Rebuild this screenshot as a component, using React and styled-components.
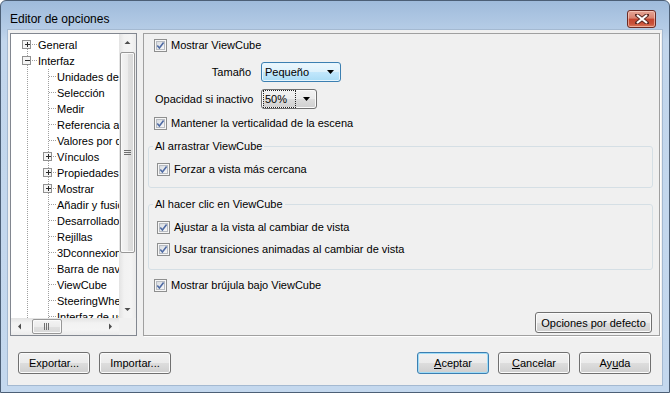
import React from "react";
import styled, { createGlobalStyle } from "styled-components";

const GlobalStyle = createGlobalStyle`
  html, body { margin: 0; padding: 0; background: #fff; }
  body {
    font-family: "Liberation Sans", Arial, sans-serif;
    font-size: 11px;
    color: #000;
  }
`;

const treeItems = [
  { level: 0, label: "General", exp: "+", first: true },
  { level: 0, label: "Interfaz", exp: "-" },
  { level: 1, label: "Unidades de visualización" },
  { level: 1, label: "Selección" },
  { level: 1, label: "Medir" },
  { level: 1, label: "Referencia a objeto" },
  { level: 1, label: "Valores por defecto" },
  { level: 1, label: "Vínculos", exp: "+" },
  { level: 1, label: "Propiedades rápidas", exp: "+" },
  { level: 1, label: "Mostrar", exp: "+" },
  { level: 1, label: "Añadir y fusionar" },
  { level: 1, label: "Desarrollador" },
  { level: 1, label: "Rejillas" },
  { level: 1, label: "3Dconnexion" },
  { level: 1, label: "Barra de navegación" },
  { level: 1, label: "ViewCube" },
  { level: 1, label: "SteeringWheels" },
  { level: 1, label: "Interfaz de usuario" },
];

const Window = styled.div`
  width: 670px;
  height: 393px;
  box-sizing: border-box;
  border: 1px solid #4c5f76;
  border-radius: 6px 6px 0 0;
  background: linear-gradient(#9fbbdb 0px, #b5cce6 28px, #c2d6ec 40px, #c4d8ee 100%);
  display: flex;
  flex-direction: column;
  overflow: hidden;
`;

const TitleBar = styled.div`
  height: 29px;
  flex: none;
  display: flex;
  align-items: center;
  justify-content: space-between;
  padding: 0 13px 0 9px;
`;

const Title = styled.span`
  font-size: 12px;
  padding-top: 7px;
`;

const CloseBtn = styled.div`
  width: 27px;
  height: 16px;
  margin-top: 7px;
  border: 1px solid #6b2b25;
  border-radius: 3px;
  background: linear-gradient(#e6a596 0%, #d8826f 45%, #c5442e 50%, #c9523a 80%, #dc7a5c 100%);
  box-shadow: inset 0 0 0 1px rgba(255, 220, 210, 0.55);
  display: flex;
  align-items: center;
  justify-content: center;
`;

const Client = styled.div`
  flex: 1;
  margin: 0 7px 7px;
  background: #f0f0f0;
  box-shadow: 0 0 0 1px #a4b9d1;
  display: flex;
  flex-direction: column;
  padding: 3px 2px 0;
`;

const Main = styled.div`
  display: flex;
  gap: 6px;
  height: 303px;
`;

/* ---------- tree ---------- */

const Tree = styled.div`
  width: 127px;
  box-sizing: border-box;
  border: 1px solid #828790;
  background: #fff;
  display: grid;
  grid-template-columns: 1fr 17px;
  grid-template-rows: 1fr 17px;
  overflow: hidden;
`;

const TreeBody = styled.div`
  overflow: hidden;
  padding-top: 3px;
`;

const TreeRow = styled.div`
  height: 16px;
  display: flex;
  align-items: center;
  padding-left: 5px;
  white-space: nowrap;
`;

const Guide = styled.svg`
  flex: none;
  display: block;
`;

const TreeLabel = styled.span`
  line-height: 16px;
`;

const VScroll = styled.div`
  grid-column: 2;
  grid-row: 1;
  display: flex;
  flex-direction: column;
  background: linear-gradient(90deg, #e3e3e3, #f2f2f2 30%, #f4f4f4 70%, #ebebeb);
`;

const HScroll = styled.div`
  grid-column: 1;
  grid-row: 2;
  display: flex;
  background: linear-gradient(#e3e3e3, #f2f2f2 30%, #f4f4f4 70%, #ebebeb);
`;

const Corner = styled.div`
  grid-column: 2;
  grid-row: 2;
  background: #f0f0f0;
`;

const ArrowBox = styled.div`
  flex: none;
  width: 17px;
  height: 17px;
  display: flex;
  align-items: center;
  justify-content: center;
`;

const Track = styled.div`
  flex: 1;
  display: flex;
  flex-direction: ${(p) => (p.$vertical ? "column" : "row")};
  padding: ${(p) => (p.$vertical ? "1px 1px" : "1px 0")};
`;

const Thumb = styled.div`
  box-sizing: border-box;
  flex: none;
  ${(p) => (p.$vertical ? `height: ${p.$size}px;` : `width: ${p.$size}px; margin-left: ${p.$offset}px;`)}
  border: 1px solid #979797;
  border-radius: 2px;
  background: ${(p) =>
    p.$vertical
      ? "linear-gradient(90deg, #f4f4f4, #ececec 50%, #e0e0e0 51%, #d8d8d8)"
      : "linear-gradient(#f4f4f4, #ececec 50%, #e0e0e0 51%, #d8d8d8)"};
  box-shadow: inset 0 0 0 1px #fafafa;
  display: flex;
  align-items: center;
  justify-content: center;
`;

/* ---------- right panel ---------- */

const Panel = styled.div`
  flex: 1;
  border: 1px solid #a0a0a0;
  box-shadow: 1px 1px 0 #fff;
  display: flex;
  flex-direction: column;
  padding: 3px 6px 1px 4px;
`;

const CheckRow = styled.label`
  display: flex;
  align-items: center;
  height: 16px;
  margin-top: ${(p) => p.$top || 0}px;
  margin-left: ${(p) => (p.$indent ?? 6)}px;
  white-space: nowrap;
`;

const CheckSvg = styled.svg`
  flex: none;
  display: block;
  margin-right: 4px;
`;

const FieldRow = styled.div`
  display: grid;
  grid-template-columns: 96px auto;
  column-gap: 10px;
  align-items: center;
  height: 20px;
  margin-top: ${(p) => p.$top}px;
  margin-left: 7px;
`;

const FieldLabel = styled.span`
  text-align: right;
  white-space: nowrap;
`;

const Combo = styled.div`
  box-sizing: border-box;
  width: ${(p) => p.$width}px;
  height: 20px;
  border: 1px solid ${(p) => (p.$hot ? "#3c7fb1" : "#707070")};
  border-radius: 3px;
  background: ${(p) =>
    p.$hot
      ? "linear-gradient(#ecf7fd 0%, #dcf1fc 50%, #c2e7fc 51%, #aadcf6 100%)"
      : "linear-gradient(#f2f2f2 0%, #ebebeb 50%, #dddddd 51%, #cfcfcf 100%)"};
  box-shadow: inset 0 0 0 1px ${(p) => (p.$hot ? "#e6f5fd" : "#fafafa")};
  display: flex;
  align-items: center;
  padding-left: ${(p) => (p.$hot ? 3 : 2)}px;
`;

const ComboText = styled.span`
  flex: 1;
  display: flex;
`;

const Focus = styled.span`
  outline: 1px dotted #222;
  padding: 1px 8px 1px 1px;
  line-height: 14px;
`;

const ComboArrow = styled.svg`
  flex: none;
  margin: 0 6px 0 4px;
`;

const Group = styled.fieldset`
  margin: ${(p) => p.$top}px 0 0;
  padding: 0 8px ${(p) => p.$bottom}px;
  border: 1px solid #d5dfe5;
  border-radius: 3px;
  min-width: 0;
`;

const Legend = styled.legend`
  padding: 0 2px;
  margin-left: -4px;
  line-height: 14px;
  font-size: 11px;
`;

const Button = styled.button`
  box-sizing: border-box;
  width: ${(p) => p.$width || 72}px;
  height: 22px;
  padding: 0;
  font-family: inherit;
  font-size: 11px;
  color: #000;
  border: 1px solid ${(p) => (p.$default ? "#3c7fb1" : "#707070")};
  border-radius: 3px;
  background: linear-gradient(#f2f2f2 0%, #ebebeb 50%, #dddddd 51%, #cfcfcf 100%);
  box-shadow: inset 0 0 0 1px ${(p) => (p.$default ? "#9fdcf7" : "#fbfbfb")};
  flex: none;
`;

const DefaultsButton = styled(Button)`
  margin-top: auto;
  align-self: flex-end;
  margin-right: 1px;
  margin-bottom: 1px;
  height: 21px;
`;

const Footer = styled.div`
  display: flex;
  gap: 9px;
  margin-top: 16px;
  padding: 0 9px 0 8px;
`;

const Spacer = styled.div`
  flex: 1;
`;

/* ---------- drawings ---------- */

const Check = () => (
  <CheckSvg width="13" height="13" viewBox="0 0 13 13">
    <defs>
      <linearGradient id="cbfill" x1="0" y1="0" x2="1" y2="1">
        <stop offset="0" stopColor="#d6dadf" />
        <stop offset="1" stopColor="#f9f9f9" />
      </linearGradient>
    </defs>
    <rect x="0.5" y="0.5" width="12" height="12" fill="#f6f6f6" stroke="#8e8f8f" />
    <rect x="2.5" y="2.5" width="8" height="8" fill="url(#cbfill)" stroke="#b8bcc2" />
    <path d="M3.3 6.4 L5.4 8.9 L9.6 3.4" fill="none" stroke="#4f6ba4" strokeWidth="1.6" />
  </CheckSvg>
);

const Arrow = ({ dir }) => {
  const shapes = {
    up: "M0.5 4 L3.5 1 L6.5 4 Z",
    down: "M0.5 1 L3.5 4 L6.5 1 Z",
    left: "M4 0.5 L1 3.5 L4 6.5 Z",
    right: "M1 0.5 L4 3.5 L1 6.5 Z",
  };
  const vertical = dir === "up" || dir === "down";
  return (
    <svg width={vertical ? 7 : 5} height={vertical ? 5 : 7} viewBox={vertical ? "0 0 7 5" : "0 0 5 7"}>
      <path d={shapes[dir]} fill="#4d4d4d" />
    </svg>
  );
};

const Expander = ({ cx, sign }) => (
  <g>
    <rect x={cx - 4.5} y="3.5" width="8" height="8" fill="#f4f4f4" stroke="#919191" />
    <line x1={cx - 2} y1="7.5" x2={cx + 3} y2="7.5" stroke="#2b2b2b" />
    {sign === "+" && <line x1={cx + 0.5} y1="5" x2={cx + 0.5} y2="10" stroke="#2b2b2b" />}
  </g>
);

const dot = { stroke: "#a0a0a0", strokeDasharray: "1 1", shapeRendering: "crispEdges" };

const Connector = ({ width, cx, exp, first }) => (
  <Guide width={width} height="16" viewBox={`0 0 ${width} 16`}>
    <line x1={cx + 0.5} y1={first ? 8 : 0} x2={cx + 0.5} y2="16" {...dot} />
    <line x1={exp ? cx + 5 : cx + 1} y1="7.5" x2={width} y2="7.5" {...dot} />
    {exp && <Expander cx={cx} sign={exp} />}
  </Guide>
);

const Indent = () => (
  <Guide width="22" height="16" viewBox="0 0 22 16">
    <line x1="11.5" y1="0" x2="11.5" y2="16" {...dot} />
  </Guide>
);

const Grip = ({ vertical }) => (
  <svg width={vertical ? 7 : 6} height={vertical ? 6 : 7} viewBox={vertical ? "0 0 7 6" : "0 0 6 7"}>
    {[0, 2, 4].map((o) =>
      vertical ? (
        <line key={o} x1="0" y1={o + 0.5} x2="7" y2={o + 0.5} stroke="#6f6f6f" />
      ) : (
        <line key={o} x1={o + 0.5} y1="0" x2={o + 0.5} y2="7" stroke="#6f6f6f" />
      )
    )}
  </svg>
);

const App = () => {
  return (
    <>
      <GlobalStyle />
      <Window>
        <TitleBar>
          <Title>Editor de opciones</Title>
          <CloseBtn>
            <svg width="14" height="10" viewBox="0 0 14 10">
              <path d="M2 1 L12 9 M12 1 L2 9" stroke="#5b2a24" strokeWidth="4" strokeLinecap="square" />
              <path d="M2 1 L12 9 M12 1 L2 9" stroke="#fff" strokeWidth="2.2" />
            </svg>
          </CloseBtn>
        </TitleBar>
        <Client>
          <Main>
            <Tree>
              <TreeBody>
                {treeItems.map((it) => (
                  <TreeRow key={it.label}>
                    {it.level === 0 ? (
                      <Connector width={22} cx={11} exp={it.exp} first={it.first} />
                    ) : (
                      <>
                        <Indent />
                        <Connector width={19} cx={10} exp={it.exp} />
                      </>
                    )}
                    <TreeLabel>{it.label}</TreeLabel>
                  </TreeRow>
                ))}
              </TreeBody>
              <VScroll>
                <ArrowBox>
                  <Arrow dir="up" />
                </ArrowBox>
                <Track $vertical>
                  <Thumb $vertical $size={201}>
                    <Grip vertical />
                  </Thumb>
                </Track>
                <ArrowBox>
                  <Arrow dir="down" />
                </ArrowBox>
              </VScroll>
              <HScroll>
                <ArrowBox>
                  <Arrow dir="left" />
                </ArrowBox>
                <Track>
                  <Thumb $size={30} $offset={4}>
                    <Grip />
                  </Thumb>
                </Track>
                <ArrowBox>
                  <Arrow dir="right" />
                </ArrowBox>
              </HScroll>
              <Corner />
            </Tree>

            <Panel>
              <CheckRow>
                <Check />
                Mostrar ViewCube
              </CheckRow>
              <FieldRow $top={9}>
                <FieldLabel>Tamaño</FieldLabel>
                <Combo $hot $width={80}>
                  <ComboText>Pequeño</ComboText>
                  <ComboArrow width="7" height="4" viewBox="0 0 7 4">
                    <path d="M0 0 L7 0 L3.5 4 Z" fill="#000" />
                  </ComboArrow>
                </Combo>
              </FieldRow>
              <FieldRow $top={7}>
                <FieldLabel>Opacidad si inactivo</FieldLabel>
                <Combo $width={56}>
                  <ComboText>
                    <Focus>50%</Focus>
                  </ComboText>
                  <ComboArrow width="7" height="4" viewBox="0 0 7 4">
                    <path d="M0 0 L7 0 L3.5 4 Z" fill="#000" />
                  </ComboArrow>
                </Combo>
              </FieldRow>
              <CheckRow $top={6}>
                <Check />
                Mantener la verticalidad de la escena
              </CheckRow>

              <Group $top={8} $bottom={10}>
                <Legend>Al arrastrar ViewCube</Legend>
                <CheckRow $top={8} $indent={0}>
                  <Check />
                  Forzar a vista más cercana
                </CheckRow>
              </Group>

              <Group $top={9} $bottom={12}>
                <Legend>Al hacer clic en ViewCube</Legend>
                <CheckRow $top={8} $indent={0}>
                  <Check />
                  Ajustar a la vista al cambiar de vista
                </CheckRow>
                <CheckRow $top={6} $indent={0}>
                  <Check />
                  Usar transiciones animadas al cambiar de vista
                </CheckRow>
              </Group>

              <CheckRow $top={7}>
                <Check />
                Mostrar brújula bajo ViewCube
              </CheckRow>

              <DefaultsButton $width={117}>Opciones por defecto</DefaultsButton>
            </Panel>
          </Main>

          <Footer>
            <Button>Exportar...</Button>
            <Button>Importar...</Button>
            <Spacer />
            <Button $default>
              <u>A</u>ceptar
            </Button>
            <Button>
              <u>C</u>ancelar
            </Button>
            <Button>
              Ay<u>u</u>da
            </Button>
          </Footer>
        </Client>
      </Window>
    </>
  );
};

export default App;
